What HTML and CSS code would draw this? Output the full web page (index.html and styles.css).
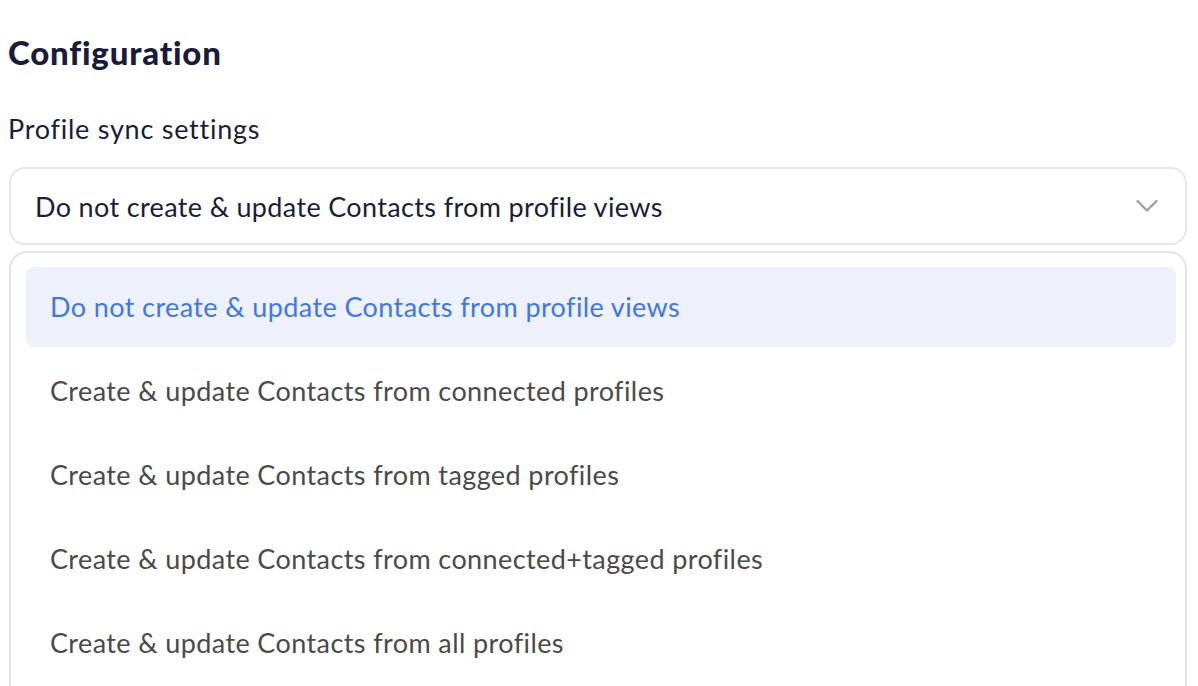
FILE: index.html
```html
<!DOCTYPE html>
<html lang="en">
<head>
<meta charset="utf-8">
<title>Configuration</title>
<link rel="stylesheet" href="styles.css">
</head>
<body>
<main class="page">
  <h1 class="title">Configuration</h1>
  <label class="label">Profile sync settings</label>
  <div class="select">
    <span class="select-value">Do not create &amp; update Contacts from profile views</span>
    <svg class="chevron" width="22" height="14" viewBox="0 0 22 14" aria-hidden="true">
      <path d="M1.5 2 L11 11.5 L20.5 2" fill="none" stroke="#9b99ab" stroke-width="2.2" stroke-linecap="round" stroke-linejoin="round"/>
    </svg>
  </div>
  <ul class="menu">
    <li class="option selected">Do not create &amp; update Contacts from profile views</li>
    <li class="option">Create &amp; update Contacts from connected profiles</li>
    <li class="option">Create &amp; update Contacts from tagged profiles</li>
    <li class="option">Create &amp; update Contacts from connected+tagged profiles</li>
    <li class="option">Create &amp; update Contacts from all profiles</li>
  </ul>
</main>
</body>
</html>
```

FILE: styles.css
```css
* { box-sizing: border-box; }
html, body { margin: 0; padding: 0; background: #ffffff; }
body {
  font-family: Lato, "Open Sans", sans-serif;
  color: #1b1d3a;
  overflow: hidden;
  height: 686px;
}
.page {
  padding: 33px 11px 0 8px;
  display: flex;
  flex-direction: column;
}
.title {
  margin: 0;
  font-size: 33px;
  font-weight: 900;
  line-height: 38px;
  letter-spacing: 0.8px;
  color: #1a1c3b;
}
.label {
  margin-top: 42px;
  font-size: 27px;
  line-height: 32px;
  letter-spacing: 0.75px;
  color: #1b1d3a;
}
.select {
  margin-top: 22px;
  margin-left: 1px;
  height: 78px;
  border: 2px solid #e6e6e8;
  border-radius: 16px;
  display: flex;
  align-items: center;
  justify-content: space-between;
  padding: 0 27px 0 24px;
}
.select-value {
  font-size: 27px;
  letter-spacing: 0.35px;
  color: #1b1d3a;
}
.chevron { display: block; }
.menu {
  list-style: none;
  margin: 6px 0 0 1px;
  padding: 14px 9px 0 15px;
  border: 2px solid #e4e4e6;
  border-radius: 18px;
  height: 460px;
  display: flex;
  flex-direction: column;
  gap: 4px;
}
.option {
  height: 80px;
  display: flex;
  align-items: center;
  padding-left: 24px;
  padding-bottom: 2px;
  font-size: 27px;
  letter-spacing: 0.4px;
  color: #4a4a4d;
  border-radius: 8px;
}
.option.selected {
  background: #eef0fb;
  color: #4278dc;
}
```
